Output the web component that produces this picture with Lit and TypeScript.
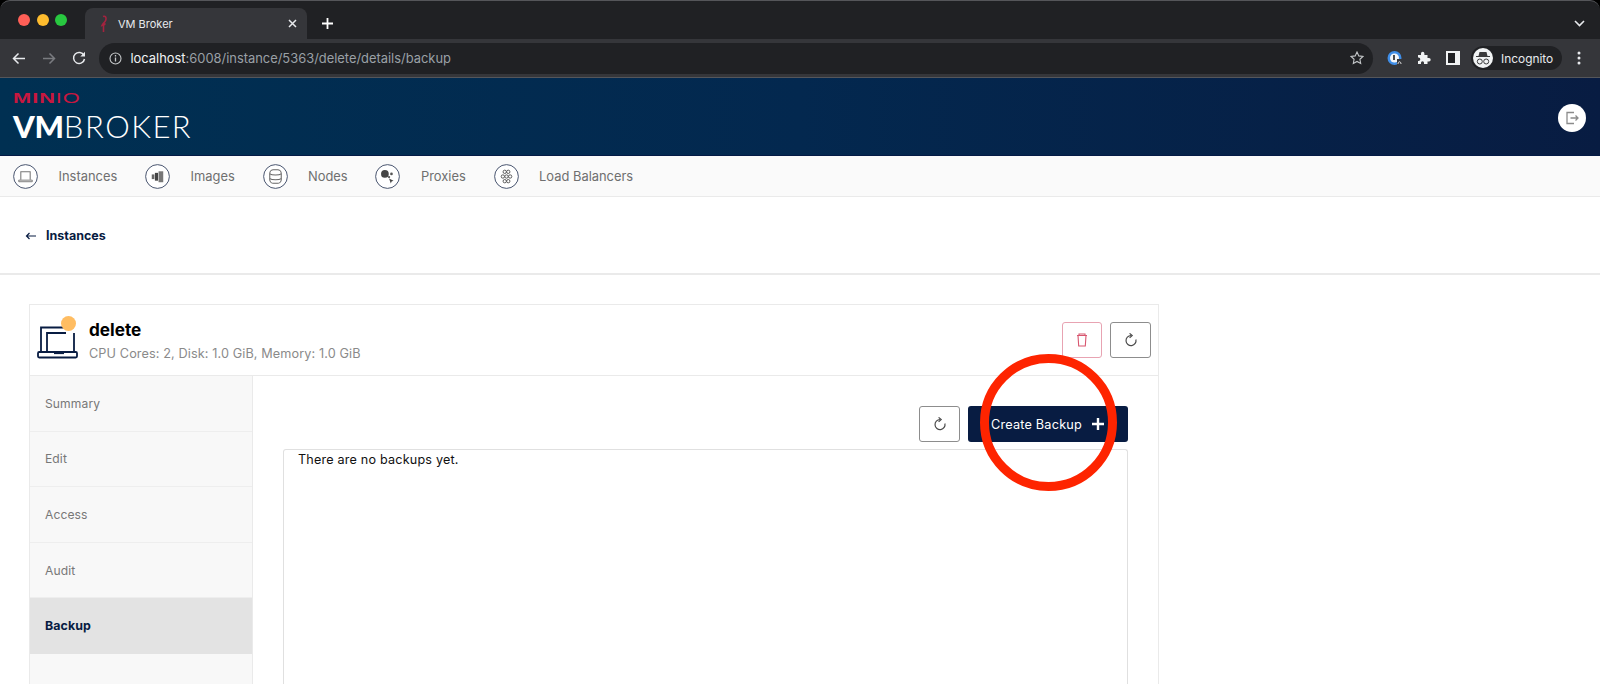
import { LitElement, html, css, svg } from "lit";
import { customElement } from "lit/decorators.js";

const reloadIcon = svg`<svg width="14" height="14" viewBox="0 0 14 14" fill="none" stroke="#4a4a4a" stroke-width="1.2"><path d="M11.900 6.500A5 5 0 1 1 7 2.600"/><path d="M5.600 .4 8.200 2.600 5.600 4.900"/></svg>`;

const navItems: [string, any][] = [
  ["Instances", svg`<path d="M7.500 15V7.500h9V15" fill="none" stroke="#777" stroke-width="1"/><path d="M5.500 15.500h13v1.500h-13z" fill="none" stroke="#777" stroke-width=".9"/>`],
  ["Images", svg`<rect x="6.500" y="10" width="2.500" height="4.500" fill="#666"/><rect x="9.500" y="8.500" width="3" height="7.500" fill="#444"/><rect x="13" y="7" width="4.500" height="10.500" fill="#777"/>`],
  ["Nodes", svg`<g fill="none" stroke="#666" stroke-width="1"><rect x="6.500" y="5.500" width="11" height="13" rx="3.500"/><path d="M6.500 9.500c2 1.500 9 1.500 11 0M6.500 14c2 1.500 9 1.500 11 0"/></g>`],
  ["Proxies", svg`<circle cx="9.500" cy="9.500" r="3.700" fill="#444"/><circle cx="15.800" cy="9.500" r="1.300" fill="#555"/><circle cx="13.500" cy="12.500" r="1.100" fill="#555"/><path d="M13.500 14l4.300 2-1.900.7-.7 1.900z" fill="#444"/>`],
  ["Load Balancers", svg`<g fill="none" stroke="#555" stroke-width=".9"><circle cx="10.300" cy="7.500" r="1.600"/><circle cx="13.700" cy="7.500" r="1.600"/><circle cx="8.500" cy="12" r="1.600"/><circle cx="12" cy="12" r="1.600"/><circle cx="15.500" cy="12" r="1.600"/><circle cx="10.300" cy="16.500" r="1.600"/><circle cx="13.700" cy="16.500" r="1.600"/></g>`],
];

@customElement("app-root")
export class AppRoot extends LitElement {
  static styles = css`
    :host { display: block; position: relative; width: 1600px; height: 684px; overflow: hidden; background: #fff; font-family: Inter, "Liberation Sans", sans-serif; }
    .chrome { background: #000; }
    .tabbar { height: 39px; background: #202124; display: flex; align-items: flex-end; padding-left: 18px; border-top: 1px solid #55565a; box-sizing: border-box; border-radius: 10px 10px 0 0; }
    .lights { display: flex; gap: 6.500px; align-self: flex-start; margin-top: 13px; width: 67px; }
    .lights i { width: 12px; height: 12px; border-radius: 50%; flex: none; }
    .tab { width: 222px; height: 31px; background: #35363a; border-radius: 8px 8px 0 0; display: flex; align-items: center; color: #e8eaed; font-size: 11px; box-sizing: border-box; padding: 0 10px 0 13px; }
    .tab .title { margin-left: 8px; flex: 1; }
    .newtab { margin: 0 0 3px 14px; height: 26px; display: flex; align-items: center; }
    .spacer { flex: 1; }
    .caret { margin: 0 15px 12px 0; display: flex; }
    .toolbar { height: 39px; background: #35363a; display: flex; align-items: center; box-sizing: border-box; padding: 0 12px; border-bottom: 1px solid #55565a; }
    .navbtns { display: flex; gap: 16px; width: 87px; align-items: center; }
    .omni { width: 1274px; height: 31px; border-radius: 16px; background: #202124; display: flex; align-items: center; box-sizing: border-box; padding: 0 9px 0 10px; font-size: 12.900px; color: #9aa0a6; }
    .omni b { color: #f1f3f4; font-weight: 400; }
    .omni .info { margin-right: 8.500px; }
    .omni .url { flex: 1; }
    .tools { display: flex; align-items: center; margin-left: 14px; flex: 1; }
    .tools svg { flex: none; }
    .ext1 { margin-right: 14px; }
    .ext2 { margin-right: 15px; }
    .profile { margin-left: 11px; width: 91px; height: 24px; background: #202124; border-radius: 12px; display: flex; align-items: center; color: #e8eaed; font-size: 11.900px; gap: 8px; padding-left: 2px; box-sizing: border-box; }
    .avatar { width: 20px; height: 20px; border-radius: 50%; background: #f1f3f4; display: flex; align-items: center; justify-content: center; }
    .dots { margin-left: 15px; display: flex; }

    .brand { height: 78px; background: linear-gradient(90deg, #003052 0%, #03284f 50%, #081c42 100%); border-bottom: 1px solid #041a45; box-sizing: border-box; display: flex; justify-content: space-between; align-items: flex-start; padding: 12px 14px 0 13px; }
    .logo { display: flex; flex-direction: column; }
    .minio { color: #c8173f; font-size: 14px; font-weight: 700; line-height: 16px; letter-spacing: .6px; font-family: "Liberation Sans", sans-serif; transform: scaleX(1.560); transform-origin: left; white-space: nowrap; }
    .minio span { font-weight: 400; }
    .vm { color: #fff; font-size: 31px; line-height: 35px; margin-top: 3px; font-family: Lato, sans-serif; letter-spacing: 1.500px; font-weight: 300; }
    .vm b { font-weight: 900; letter-spacing: -.2px; }
    .logout { width: 28px; height: 28px; border-radius: 50%; background: #fff; margin-top: 14px; display: flex; align-items: center; justify-content: center; }

    .nav { height: 41px; background: #fafafa; border-bottom: 1px solid #eaeaea; box-sizing: border-box; display: flex; align-items: center; padding-left: 13px; color: #6f6f6f; font-size: 12.900px; }
    .nav-item { display: flex; align-items: center; margin-right: 27.800px; }
    .nav-item svg { margin-right: 20.500px; flex: none; }
    .crumbs { height: 78px; border-bottom: 2px solid #eaeaea; box-sizing: border-box; display: flex; align-items: center; padding: 1px 0 0 25px; color: #081c42; font-size: 12.500px; font-weight: 700; gap: 10px; }

    .card { margin: 29px 0 0 29px; width: 1130px; height: 400px; border: 1px solid #eaeaea; border-bottom: 0; box-sizing: border-box; }
    .card-head { height: 71px; border-bottom: 1px solid #eaeaea; box-sizing: border-box; display: flex; align-items: center; padding: 0 7px 0 7px; }
    .inst-icon { position: relative; width: 42px; height: 44px; margin-right: 10px; }
    .dot { position: absolute; left: 24px; top: -2px; width: 15px; height: 15px; border-radius: 50%; background: #ffbd62; }
    .inst-name { font-size: 17.200px; font-weight: 700; color: #000; line-height: 20px; margin-top: 4px; }
    .inst-meta { font-size: 12.700px; color: #8a8a8a; line-height: 20px; margin-top: 4px; letter-spacing: .1px; }
    .head-actions { margin-left: auto; display: flex; gap: 8px; margin-top: -1px; }
    .btn { width: 41px; height: 36px; box-sizing: border-box; border: 1px solid #8d8d8d; border-radius: 3px; background: #fff; display: flex; align-items: center; justify-content: center; padding: 0; }
    .btn.danger { width: 40px; border-color: #e8a3b2; }
    .body { display: flex; height: 310px; }
    .side { width: 223px; background: #f8f8f8; border-right: 1px solid #eaeaea; box-sizing: border-box; flex: none; }
    .side div { height: 55.600px; border-bottom: 1px solid #eeeeee; box-sizing: border-box; display: flex; align-items: center; padding-left: 15px; font-size: 12.100px; color: #777; letter-spacing: .1px; }
    .side div.active { background: #e3e3e3; color: #081c42; font-weight: 700; font-size: 12.400px; border-bottom-color: #e3e3e3; }
    .main { flex: 1; padding: 30px 0 0 30px; box-sizing: border-box; }
    .actions { width: 845px; display: flex; justify-content: flex-end; gap: 8px; height: 36px; }
    .create { width: 160px; height: 36px; box-sizing: border-box; background: #081c42; color: #fff; border: 0; border-radius: 3px; display: flex; align-items: center; justify-content: center; gap: 9px; font: 12.700px Inter, sans-serif; letter-spacing: .2px; padding: 0; }
    .panel { margin-top: 7px; width: 845px; height: 300px; box-sizing: border-box; border: 1px solid #e0e0e0; border-bottom: 0; border-radius: 3px 3px 0 0; padding: 3px 14px; font-size: 12.600px; line-height: 14px; color: #111; letter-spacing: .2px; }
    .ring { position: absolute; left: 980px; top: 354px; width: 137px; height: 137px; border: 9px solid #fe2400; border-radius: 50%; box-sizing: border-box; pointer-events: none; }
  `;

  render() {
    return html`
      <div class="chrome">
        <div class="tabbar">
          <div class="lights"><i style="background:#ff5f57"></i><i style="background:#febc2e"></i><i style="background:#28c840"></i></div>
          <div class="tab">
            <svg width="12" height="18" viewBox="0 0 12 18" fill="none" stroke="#a3233f" stroke-width="1.600"><path d="M5 1.500c2.500-1 3.500 1 2.800 3.500S5 8 4 10.500c2-.5 3-1 3.500-2"/><path d="M5.500 10v7"/></svg>
            <span class="title">VM Broker</span>
            <svg width="9" height="9" viewBox="0 0 9 9" stroke="#e8eaed" stroke-width="1.500"><path d="M1 1l7 7M8 1l-7 7"/></svg>
          </div>
          <div class="newtab"><svg width="13" height="13" viewBox="0 0 13 13" stroke="#fff" stroke-width="1.800"><path d="M6.500 1v11M1 6.500h11"/></svg></div>
          <div class="spacer"></div>
          <div class="caret"><svg width="11" height="7" viewBox="0 0 11 7" fill="none" stroke="#e8eaed" stroke-width="1.600"><path d="M1 1l4.500 4.500L10 1"/></svg></div>
        </div>
        <div class="toolbar">
          <div class="navbtns">
            <svg width="14" height="13" viewBox="0 0 14 13" fill="none" stroke="#e8eaed" stroke-width="1.500"><path d="M13 6.500H2M6.500 1.500l-5 5 5 5"/></svg>
            <svg width="14" height="13" viewBox="0 0 14 13" fill="none" stroke="#7a7c80" stroke-width="1.500"><path d="M1 6.500h11M7.500 1.500l5 5-5 5"/></svg>
            <svg width="14" height="14" viewBox="0 0 14 14" fill="none" stroke="#e8eaed" stroke-width="1.500"><path d="M12 4.500A5.500 5.500 0 1 0 12.500 8"/><path d="M13 .8v4.700H8.300z" fill="#e8eaed" stroke="none"/></svg>
          </div>
          <div class="omni">
            <svg class="info" width="13" height="13" viewBox="0 0 13 13" fill="none" stroke="#c4c7c9" stroke-width="1.100"><circle cx="6.500" cy="6.500" r="5.500"/><path d="M6.500 5.500v4M6.500 3v1.400" stroke-width="1.300"/></svg>
            <span class="url"><b>localhost</b>:6008/instance/5363/delete/details/backup</span>
            <svg width="14" height="14" viewBox="0 0 14 14" fill="none" stroke="#c4c7c9" stroke-width="1.100"><path d="M7 1l1.800 3.900 4.200.5-3.100 2.900.8 4.200L7 10.400l-3.700 2.100.8-4.200L1 5.400l4.200-.5z"/></svg>
          </div>
          <div class="tools">
            <svg class="ext1" width="16" height="16" viewBox="0 0 16 16"><circle cx="7.500" cy="8" r="7" fill="#3f8ee8"/><circle cx="7.500" cy="8" r="4.500" fill="#f4f6f8"/><path d="M7 5v5" stroke="#202124" stroke-width="1.600"/><path d="M10 9h5v6h-5z" fill="#35363a"/><path d="M11 14c0-3 3-3 3 0" stroke="#ddd" fill="none"/></svg>
            <svg class="ext2" width="14" height="14" viewBox="0 0 14 14" fill="#f1f3f4"><path d="M1 4h3V2.500a1.700 1.700 0 0 1 3.400 0V4h3.100v3H12a1.700 1.700 0 0 1 0 3.400h-1.500V13H7v-1.200a1.500 1.500 0 0 0-3 0V13H1V10h.6a1.700 1.700 0 0 0 0-3.400H1z"/></svg>
            <svg width="14" height="14" viewBox="0 0 14 14" fill="none"><rect x="0" y="0" width="14" height="14" fill="#f1f3f4"/><rect x="2" y="2" width="7" height="10" fill="#202124"/></svg>
            <div class="profile">
              <span class="avatar"><svg width="14" height="13" viewBox="0 0 14 13" fill="#3a3a3c"><path d="M3.500 0h7l1 4H14v1H0V4h2.500z"/><circle cx="3.800" cy="9.500" r="2.500" fill="none" stroke="#3a3a3c"/><circle cx="10.200" cy="9.500" r="2.500" fill="none" stroke="#3a3a3c"/></svg></span>
              Incognito
            </div>
            <div class="dots"><svg width="4" height="14" viewBox="0 0 4 14" fill="#e8eaed"><circle cx="2" cy="2" r="1.500"/><circle cx="2" cy="7" r="1.500"/><circle cx="2" cy="12" r="1.500"/></svg></div>
          </div>
        </div>
      </div>

      <div class="brand">
        <div class="logo">
          <div class="minio">MIN<span>IO</span></div>
          <div class="vm"><b>VM</b>BROKER</div>
        </div>
        <div class="logout">
          <svg width="14" height="14" viewBox="0 0 14 14" fill="none" stroke="#8b8b8b" stroke-width="1.300"><path d="M9 1.500H2v11h7M5.500 7H13M10.500 4.500 13 7l-2.500 2.500"/></svg>
        </div>
      </div>

      <div class="nav">
        ${navItems.map(([label, icon]) => html`
          <div class="nav-item">
            <svg width="25" height="25" viewBox="0 0 24 24"><circle cx="12" cy="12" r="11.400" fill="#fff" stroke="#3d4a66" stroke-width=".9"/>${icon}</svg>
            <span>${label}</span>
          </div>`)}
      </div>

      <div class="crumbs">
        <svg width="11" height="8" viewBox="0 0 11 8" fill="none" stroke="#081c42" stroke-width="1.200"><path d="M11 4H1.500M4.500 1 1.500 4l3 3"/></svg>
        <span>Instances</span>
      </div>

      <div class="card">
        <div class="card-head">
          <div class="inst-icon">
            <svg width="42" height="44" viewBox="0 0 42 44" fill="none" stroke="#081c42" stroke-width="1.800"><path d="M4 33.500V9.500h26M37 15v18.500"/><path d="M10 33.500V15h19"/><rect x="1" y="34" width="39" height="5.500" rx="1.200"/><path d="M17 35h10" stroke-width="2.200"/></svg>
            <div class="dot"></div>
          </div>
          <div>
            <div class="inst-name">delete</div>
            <div class="inst-meta">CPU Cores: 2, Disk: 1.0 GiB, Memory: 1.0 GiB</div>
          </div>
          <div class="head-actions">
            <button class="btn danger"><svg width="12" height="14" viewBox="0 0 12 14" fill="none" stroke="#d8566f" stroke-width="1.100"><path d="M1 2.500h10M2 2.500 2.700 13h6.600L10 2.500M3 2.500V1h6v1.500"/></svg></button>
            <button class="btn">${reloadIcon}</button>
          </div>
        </div>
        <div class="body">
          <div class="side">
            <div>Summary</div><div>Edit</div><div>Access</div><div>Audit</div><div class="active">Backup</div>
          </div>
          <div class="main">
            <div class="actions">
              <button class="btn">${reloadIcon}</button>
              <button class="create">Create Backup
                <svg width="14" height="14" viewBox="0 0 14 14" stroke="#fff" stroke-width="2.400"><path d="M7 1v12M1 7h12"/></svg>
              </button>
            </div>
            <div class="panel">There are no backups yet.</div>
          </div>
        </div>
      </div>
      <div class="ring"></div>
    `;
  }
}
